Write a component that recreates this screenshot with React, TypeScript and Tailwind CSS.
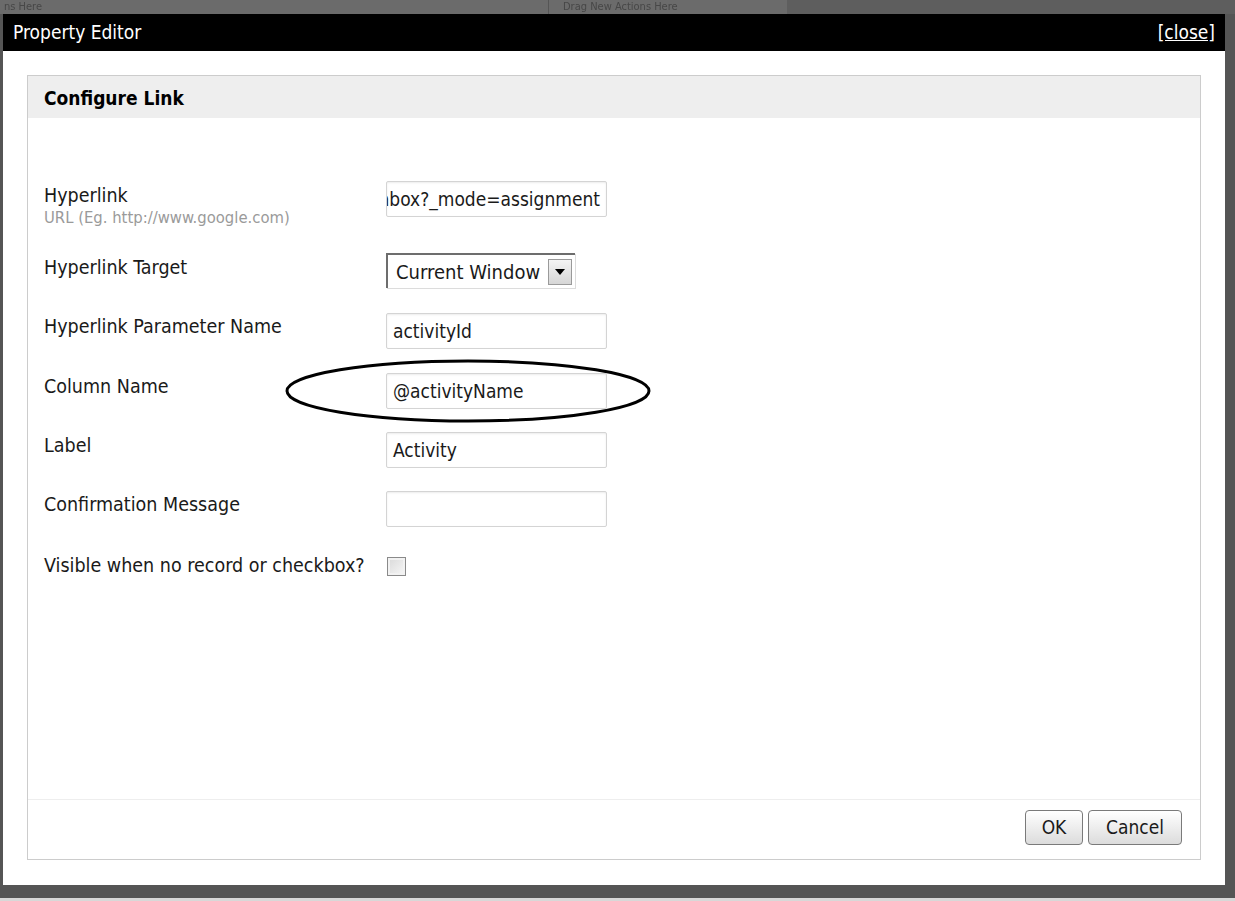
import React from 'react';

const font = { fontFamily: '"DejaVu Sans Condensed", "DejaVu Sans", sans-serif' };

function TextBox({ value, alignEnd }: { value?: string; alignEnd?: boolean }) {
  return (
    <div
      className={`flex h-[36px] w-[221px] items-center overflow-hidden whitespace-nowrap rounded-[2px] border border-[#d4d4d4] bg-white px-[6px] text-[19px] text-[#1a1a1a] shadow-[inset_0_1px_2px_rgba(0,0,0,0.08)] ${alignEnd ? 'justify-end' : ''}`}
    >
      {value}
    </div>
  );
}

function Row({ label, children, top }: { label: React.ReactNode; children: React.ReactNode; top: string }) {
  return (
    <div className={`flex h-[36px] ${top}`}>
      <div className="w-[342px] pt-[3px] leading-[22px]">{label}</div>
      {children}
    </div>
  );
}

export default function App() {
  return (
    <div className="relative h-[901px] w-[1235px] overflow-hidden bg-[#d8d8d8]" style={font}>
      {/* page behind the dialog */}
      <div className="flex h-[14px] w-full bg-[#6b6b6b] text-[11px] leading-[14px] text-[#474747]">
        <div className="w-[548px] pl-1 blur-[0.5px]">ns Here</div>
        <div className="w-[239px] border-l border-[#555] pl-[14px] blur-[0.5px]">Drag New Actions Here</div>
        <div className="flex-1 bg-[#5e5e5e]" />
      </div>

      {/* dialog frame */}
      <div className="flex h-[884px] flex-col bg-[#555] pl-[3px] pr-[10px] pb-[13px]">
        <div className="flex h-[37px] items-center justify-between bg-black pl-[10px] pr-[10px] text-[19px] text-white">
          <span>Property Editor</span>
          <span className="underline">[close]</span>
        </div>

        <div className="flex flex-1 flex-col bg-white pl-[24px] pr-[24px] pt-[24px] pb-[25px]">
          <div className="flex flex-1 flex-col border border-[#cccccc]">
            <div className="flex h-[42px] items-center bg-[#eeeeee] pl-[16px] pt-[2px] text-[19px] font-bold text-black">
              Configure Link
            </div>

            <div className="relative flex flex-1 flex-col pl-[16px] pt-[63px] text-[19.5px] text-[#1a1a1a]">
              <Row
                top=""
                label={
                  <>
                    <div className="mt-[1px]">Hyperlink</div>
                    <div className="mt-[1px] text-[16.5px] leading-[20px] text-[#9a9a9a]">URL (Eg. http://www.google.com)</div>
                  </>
                }
              >
                <TextBox value="inbox?_mode=assignment" alignEnd />
              </Row>

              <div className="mt-[36px] flex h-[36px]">
                <div className="w-[342px] pt-[4px] leading-[22px]">Hyperlink Target</div>
                <div className="flex h-[35px] w-[189px] items-center border-l-2 border-t-2 border-[#6d6d6d] bg-white pl-[8px] pr-[3px] text-[20px] shadow-[1px_1px_0_#dcdcdc]">
                  <span className="flex-1 whitespace-nowrap">Current Window</span>
                  <div className="flex h-[26px] w-[24px] items-center justify-center border border-[#9a9a9a] bg-gradient-to-b from-[#f4f4f4] to-[#d6d6d6]">
                    <svg width="10" height="6" viewBox="0 0 10 6">
                      <path d="M0 0h10L5 6z" fill="#000" />
                    </svg>
                  </div>
                </div>
              </div>

              <Row top="mt-[24px]" label="Hyperlink Parameter Name">
                <TextBox value="activityId" />
              </Row>

              <Row top="mt-[24px]" label="Column Name">
                <TextBox value="@activityName" />
              </Row>

              <Row top="mt-[23px]" label="Label">
                <TextBox value="Activity" />
              </Row>

              <Row top="mt-[23px]" label="Confirmation Message">
                <TextBox />
              </Row>

              {/* Visible checkbox */}
              <div className="mt-[28px] flex items-center">
                <span className="leading-[22px]">Visible when no record or checkbox?</span>
                <div className="ml-[22px] h-[19px] w-[19px] border border-[#8a8a8a] bg-gradient-to-br from-[#d9d9d9] to-[#f7f7f7] shadow-[inset_0_0_0_2px_#f2f2f2]" />
              </div>

              {/* highlight ellipse drawn over the Column Name field */}
              <svg className="pointer-events-none absolute left-[256px] top-[240px]" width="370" height="70" viewBox="0 0 370 70">
                <ellipse cx="184" cy="33" rx="181" ry="30" fill="none" stroke="#000" strokeWidth="3" />
              </svg>
            </div>

            <div className="flex h-[60px] items-start justify-end gap-[5px] border-t border-[#eeeeee] pr-[18px] pt-[10px]">
              <button className="h-[35px] w-[58px] rounded-[4px] border border-[#7a7a7a] bg-gradient-to-b from-[#ffffff] to-[#dcdcdc] text-[19px] text-[#1a1a1a]">
                OK
              </button>
              <button className="h-[35px] w-[94px] rounded-[4px] border border-[#7a7a7a] bg-gradient-to-b from-[#ffffff] to-[#dcdcdc] text-[19px] text-[#1a1a1a]">
                Cancel
              </button>
            </div>
          </div>
        </div>
      </div>
    </div>
  );
}
